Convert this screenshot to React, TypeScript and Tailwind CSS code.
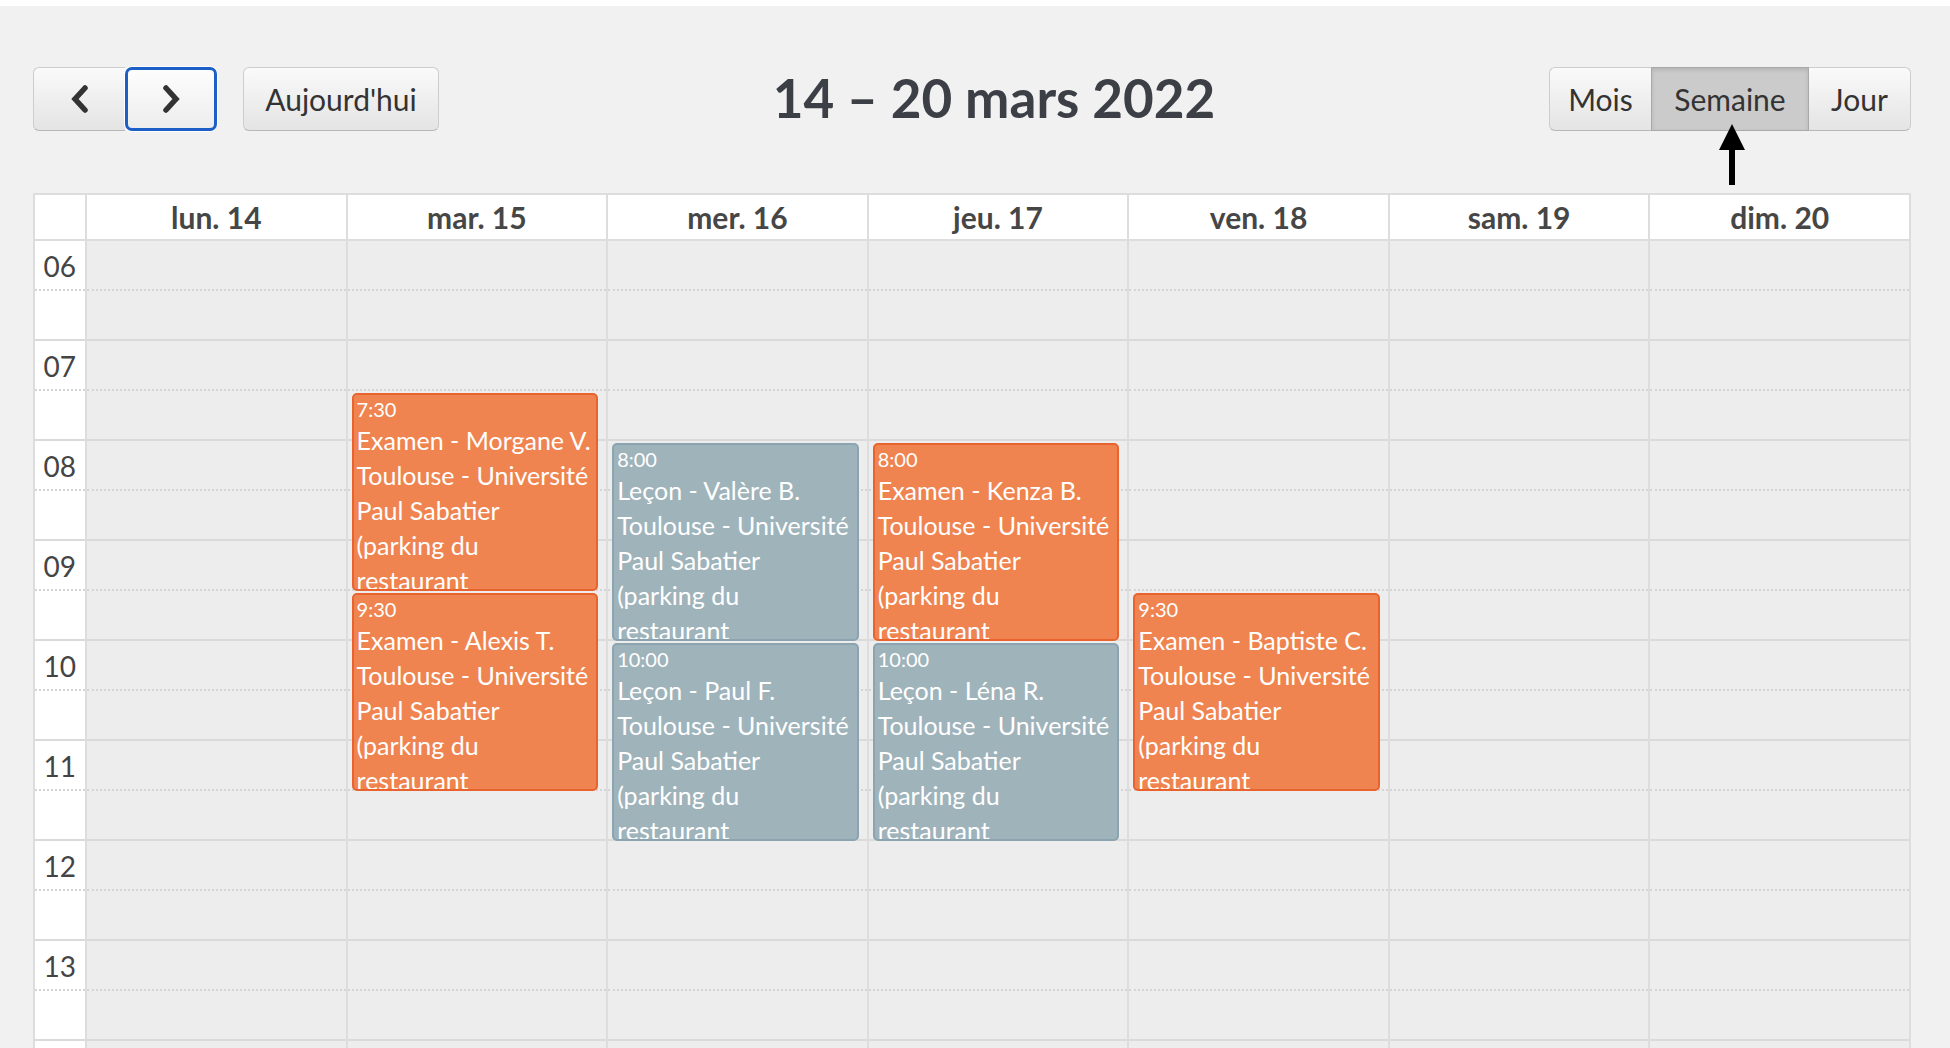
import { Fragment } from "react";

type CalEvent = {
  day: number;
  start: number;
  end: number;
  kind: "exam" | "lesson";
  time: string;
  title: string;
};

const days = ["lun. 14", "mar. 15", "mer. 16", "jeu. 17", "ven. 18", "sam. 19", "dim. 20"];
const hours = [6, 7, 8, 9, 10, 11, 12, 13, 14, 15, 16];
const FIRST_HOUR = 6;
const HOUR_PX = 100;

// lieu de rendez-vous, découpé comme dans la cellule
const placeLines = [
  "Toulouse - Université",
  "Paul Sabatier",
  "(parking du",
  "restaurant",
  "universitaire)",
];

const events: CalEvent[] = [
  { day: 1, start: 7.5, end: 9.5, kind: "exam", time: "7:30", title: "Examen - Morgane V." },
  { day: 1, start: 9.5, end: 11.5, kind: "exam", time: "9:30", title: "Examen - Alexis T." },
  { day: 2, start: 8, end: 10, kind: "lesson", time: "8:00", title: "Leçon - Valère B." },
  { day: 2, start: 10, end: 12, kind: "lesson", time: "10:00", title: "Leçon - Paul F." },
  { day: 3, start: 8, end: 10, kind: "exam", time: "8:00", title: "Examen - Kenza B." },
  { day: 3, start: 10, end: 12, kind: "lesson", time: "10:00", title: "Leçon - Léna R." },
  { day: 4, start: 9.5, end: 11.5, kind: "exam", time: "9:30", title: "Examen - Baptiste C." },
];

const btn =
  "h-[64px] flex items-center justify-center text-[30px] text-[#333] bg-linear-to-b from-[#fafafa] to-[#e4e4e4] border border-[#cdcdcd] border-b-[#b8b8b8]";

function Chevron({ dir }: { dir: "left" | "right" }) {
  return (
    <svg width="22" height="30" viewBox="0 0 22 30" fill="none">
      <path
        d={dir === "left" ? "M16 4 L6 15 L16 26" : "M6 4 L16 15 L6 26"}
        stroke="#333"
        strokeWidth="5.5"
        strokeLinecap="round"
        strokeLinejoin="miter"
      />
    </svg>
  );
}

function EventCard({ ev }: { ev: CalEvent }) {
  const top = (ev.start - FIRST_HOUR) * HOUR_PX + 2;
  const height = (ev.end - ev.start) * HOUR_PX - 2;
  return (
    <div
      className={
        "absolute left-[4px] right-[8px] overflow-hidden rounded-[5px] border-2 pl-[3px] pr-[3px] text-white " +
        (ev.kind === "exam" ? "bg-[#f08450] border-[#e9632f]" : "bg-[#9fb3bb] border-[#8ba4af]")
      }
      style={{ top, height }}
    >
      <div className="text-[20px] leading-[28px]">{ev.time}</div>
      <div className="text-[25px] leading-[35px] whitespace-nowrap">{ev.title}</div>
      {placeLines.map((l) => (
        <div key={l} className="text-[25px] leading-[35px] whitespace-nowrap">
          {l}
        </div>
      ))}
    </div>
  );
}

export default function App() {
  return (
    <div
      className="relative w-[1950px] h-[1048px] overflow-hidden bg-[#f1f1f1]"
      style={{ fontFamily: "Lato, 'Open Sans', sans-serif" }}
    >
      <div className="h-[6px] bg-white" />

      {/* barre d'outils */}
      <div className="mt-[61px] flex items-center pl-[33px] pr-[39px]">
        <div className="flex items-center">
          <button className={btn + " w-[92px] rounded-l-[6px] border-r-0"}>
            <Chevron dir="left" />
          </button>
          <button className="h-[64px] w-[92px] flex items-center justify-center rounded-[7px] border-[3px] border-[#1c5fc6] bg-linear-to-b from-[#fdfdfd] to-[#ededed] ring-1 ring-white">
            <Chevron dir="right" />
          </button>
          <button className={btn + " ml-[26px] w-[196px] rounded-[6px]"}>Aujourd'hui</button>
        </div>

        <div className="flex-1 flex justify-center pb-[4px]">
          <h2 className="text-[53px] font-bold leading-none tracking-[0px] text-[#3c3f46]">
            14 – 20 mars 2022
          </h2>
        </div>

        <div className="flex items-center">
          <button className={btn + " w-[102px] rounded-l-[6px] border-r-0"}>Mois</button>
          <button className="h-[64px] w-[158px] flex items-center justify-center text-[30px] text-[#333] bg-[#cbcbcb] border border-[#a9a9a9] shadow-[inset_0_2px_4px_rgba(0,0,0,0.12)]">
            Semaine
          </button>
          <button className={btn + " w-[102px] rounded-r-[6px] border-l-0"}>Jour</button>
        </div>
      </div>

      {/* grille de la semaine */}
      <div className="mt-[62px] ml-[33px] w-[1878px] border-2 border-[#dddddd]">
        <div className="grid grid-cols-[50px_repeat(7,minmax(0,1fr))] h-[46px] border-b-2 border-[#dddddd] bg-white">
          <div />
          {days.map((d) => (
            <div
              key={d}
              className="flex items-center justify-center border-l-2 border-[#dddddd] text-[30px] font-bold text-[#464646]"
            >
              {d}
            </div>
          ))}
        </div>

        <div className="grid grid-cols-[50px_repeat(7,minmax(0,1fr))]">
          <div className="bg-white">
            {hours.map((h) => (
              <div key={h} className="h-[100px] border-b-2 border-[#dadada]">
                <div className="h-[50px] border-b-2 border-dotted border-[#d4d4d4] pr-[9px] pt-[11px] text-right text-[28px] leading-[28px] text-[#444]">
                  {String(h).padStart(2, "0")}
                </div>
              </div>
            ))}
          </div>
          {days.map((d, i) => (
            <div key={d} className="relative border-l-2 border-[#dddddd] bg-[#ededed]">
              {hours.map((h) => (
                <Fragment key={h}>
                  <div className="h-[100px] border-b-2 border-[#dadada]">
                    <div className="h-[50px] border-b-2 border-dotted border-[#d4d4d4]" />
                  </div>
                </Fragment>
              ))}
              {events
                .filter((e) => e.day === i)
                .map((e) => (
                  <EventCard key={e.title} ev={e} />
                ))}
            </div>
          ))}
        </div>
      </div>

      {/* flèche sous « Semaine » */}
      <svg className="absolute left-[1719px] top-[124px]" width="26" height="62" viewBox="0 0 26 62">
        <path d="M13 0 L0 26 L26 26 Z" fill="#000" />
        <rect x="10" y="24" width="6" height="37" fill="#000" />
      </svg>
    </div>
  );
}
